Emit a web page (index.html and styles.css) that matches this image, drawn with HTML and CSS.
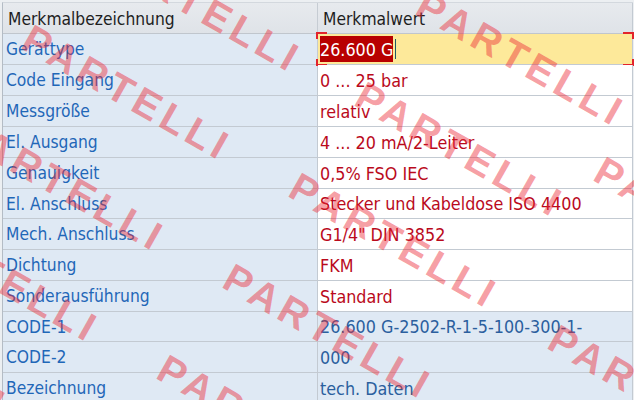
FILE: index.html
```html
<!DOCTYPE html>
<html lang="de">
<head>
<meta charset="utf-8">
<title>Merkmale</title>
<link rel="stylesheet" href="styles.css">
</head>
<body>
<div class="screen">
  <div class="grid">
    <div class="row head">
      <div class="cell key">Merkmalbezeichnung</div>
      <div class="cell val">Merkmalwert</div>
    </div>
    <div class="row">
      <div class="cell key">Gerättype</div>
      <div class="cell val edit active"><span class="sel">26.600 G</span><span class="caret"></span>
        <i class="br tl"></i><i class="br tr"></i><i class="br bl"></i><i class="br brr"></i>
      </div>
    </div>
    <div class="row">
      <div class="cell key">Code Eingang</div>
      <div class="cell val edit">0 ... 25 bar</div>
    </div>
    <div class="row">
      <div class="cell key">Messgröße</div>
      <div class="cell val edit">relativ</div>
    </div>
    <div class="row">
      <div class="cell key">El. Ausgang</div>
      <div class="cell val edit">4 ... 20 mA/2-Leiter</div>
    </div>
    <div class="row">
      <div class="cell key">Genauigkeit</div>
      <div class="cell val edit">0,5% FSO IEC</div>
    </div>
    <div class="row short">
      <div class="cell key">El. Anschluss</div>
      <div class="cell val edit">Stecker und Kabeldose ISO 4400</div>
    </div>
    <div class="row">
      <div class="cell key">Mech. Anschluss</div>
      <div class="cell val edit">G1/4" DIN 3852</div>
    </div>
    <div class="row">
      <div class="cell key">Dichtung</div>
      <div class="cell val edit">FKM</div>
    </div>
    <div class="row">
      <div class="cell key">Sonderausführung</div>
      <div class="cell val edit">Standard</div>
    </div>
    <div class="row short">
      <div class="cell key">CODE-1</div>
      <div class="cell val ro">26.600 G-2502-R-1-5-100-300-1-</div>
    </div>
    <div class="row">
      <div class="cell key">CODE-2</div>
      <div class="cell val ro">000</div>
    </div>
    <div class="row">
      <div class="cell key">Bezeichnung</div>
      <div class="cell val ro">tech. Daten</div>
    </div>
  </div>

  <div class="wm" aria-hidden="true">
    <span class="mark" style="left:106px;top:-70px">PARTELLI</span>
    <span class="mark" style="left:430px;top:-16px">PARTELLI</span>
    <span class="mark" style="left:36px;top:18px">PARTELLI</span>
    <span class="mark" style="left:369px;top:75px">PARTELLI</span>
    <span class="mark" style="left:-30px;top:109px">PARTELLI</span>
    <span class="mark" style="left:303px;top:166px">PARTELLI</span>
    <span class="mark" style="left:608px;top:150px">PARTELLI</span>
    <span class="mark" style="left:-96px;top:200px">PARTELLI</span>
    <span class="mark" style="left:237px;top:257px">PARTELLI</span>
    <span class="mark" style="left:562px;top:318px">PARTELLI</span>
    <span class="mark" style="left:-162px;top:291px">PARTELLI</span>
    <span class="mark" style="left:171px;top:348px">PARTELLI</span>
  </div>
</div>
</body>
</html>
```

FILE: styles.css
```css
html, body {
  margin: 0;
  padding: 0;
  background: #eceff2;
}

.screen {
  position: relative;
  width: 634px;
  height: 400px;
  overflow: hidden;
  background: #eceff2;
  font-family: "DejaVu Sans Condensed", "DejaVu Sans", sans-serif;
  font-size: 17.3px;
}

.grid {
  margin: 2px 0 0 2px;
  width: 630px;
  border-left: 1px solid #b4bcc5;
  border-top: 1px solid #d3d8de;
}

.row {
  display: flex;
  height: 31px;
  box-sizing: border-box;
  border-bottom: 1px solid #c3cad2;
}

.row.short {
  height: 30px;
}

.row.head {
  height: 31px;
  background: linear-gradient(#e7eaee, #dfe3e8);
  border-bottom-color: #c0c6cd;
}

.cell {
  box-sizing: border-box;
  width: 315px;
  display: flex;
  align-items: center;
  white-space: nowrap;
  overflow: visible;
}

.key {
  border-right: 1px solid #c3cad2;
  padding-left: 3px;
  background: #dfe9f4;
  color: #1f67b8;
}

.val {
  border-right: 1px solid #c3cad2;
  padding-left: 2px;
  position: relative;
  font-size: 17.8px;
}

.head .key,
.head .val {
  background: transparent;
  color: #1e1e1e;
  padding-left: 5px;
  padding-top: 2px;
  font-size: 17.3px;
}

.head .key {
  border-right-color: #c6ccd3;
}

.edit {
  background: #ffffff;
  color: #ba0a1c;
}

.ro {
  background: #dfe9f4;
  color: #2b5f9e;
}

.active {
  background: #fde99a;
}

.sel {
  background: #b80000;
  color: #ffffff;
  padding: 3px 0 2px 0;
}

.caret {
  display: inline-block;
  width: 1px;
  height: 20px;
  margin-left: 2px;
  background: #1c5b66;
}

.br {
  position: absolute;
  width: 9px;
  height: 5px;
  border-color: #e2242c;
  border-style: solid;
  border-width: 0;
}
.br.tl { left: -2px; top: -2px; border-left-width: 2px; border-top-width: 2px; }
.br.tr { right: -2px; top: -2px; border-right-width: 2px; border-top-width: 2px; }
.br.bl { left: -2px; bottom: -2px; border-left-width: 2px; border-bottom-width: 2px; }
.br.brr { right: -2px; bottom: -2px; border-right-width: 2px; border-bottom-width: 2px; }

.wm {
  position: absolute;
  inset: 0;
  pointer-events: none;
  overflow: hidden;
}

.mark {
  position: absolute;
  transform-origin: 0 0;
  transform: rotate(29.5deg);
  font-family: "Liberation Sans", Arial, sans-serif;
  font-weight: bold;
  font-size: 40px;
  line-height: 1;
  letter-spacing: 5px;
  color: rgba(236, 40, 52, 0.45);
  white-space: nowrap;
}
```
